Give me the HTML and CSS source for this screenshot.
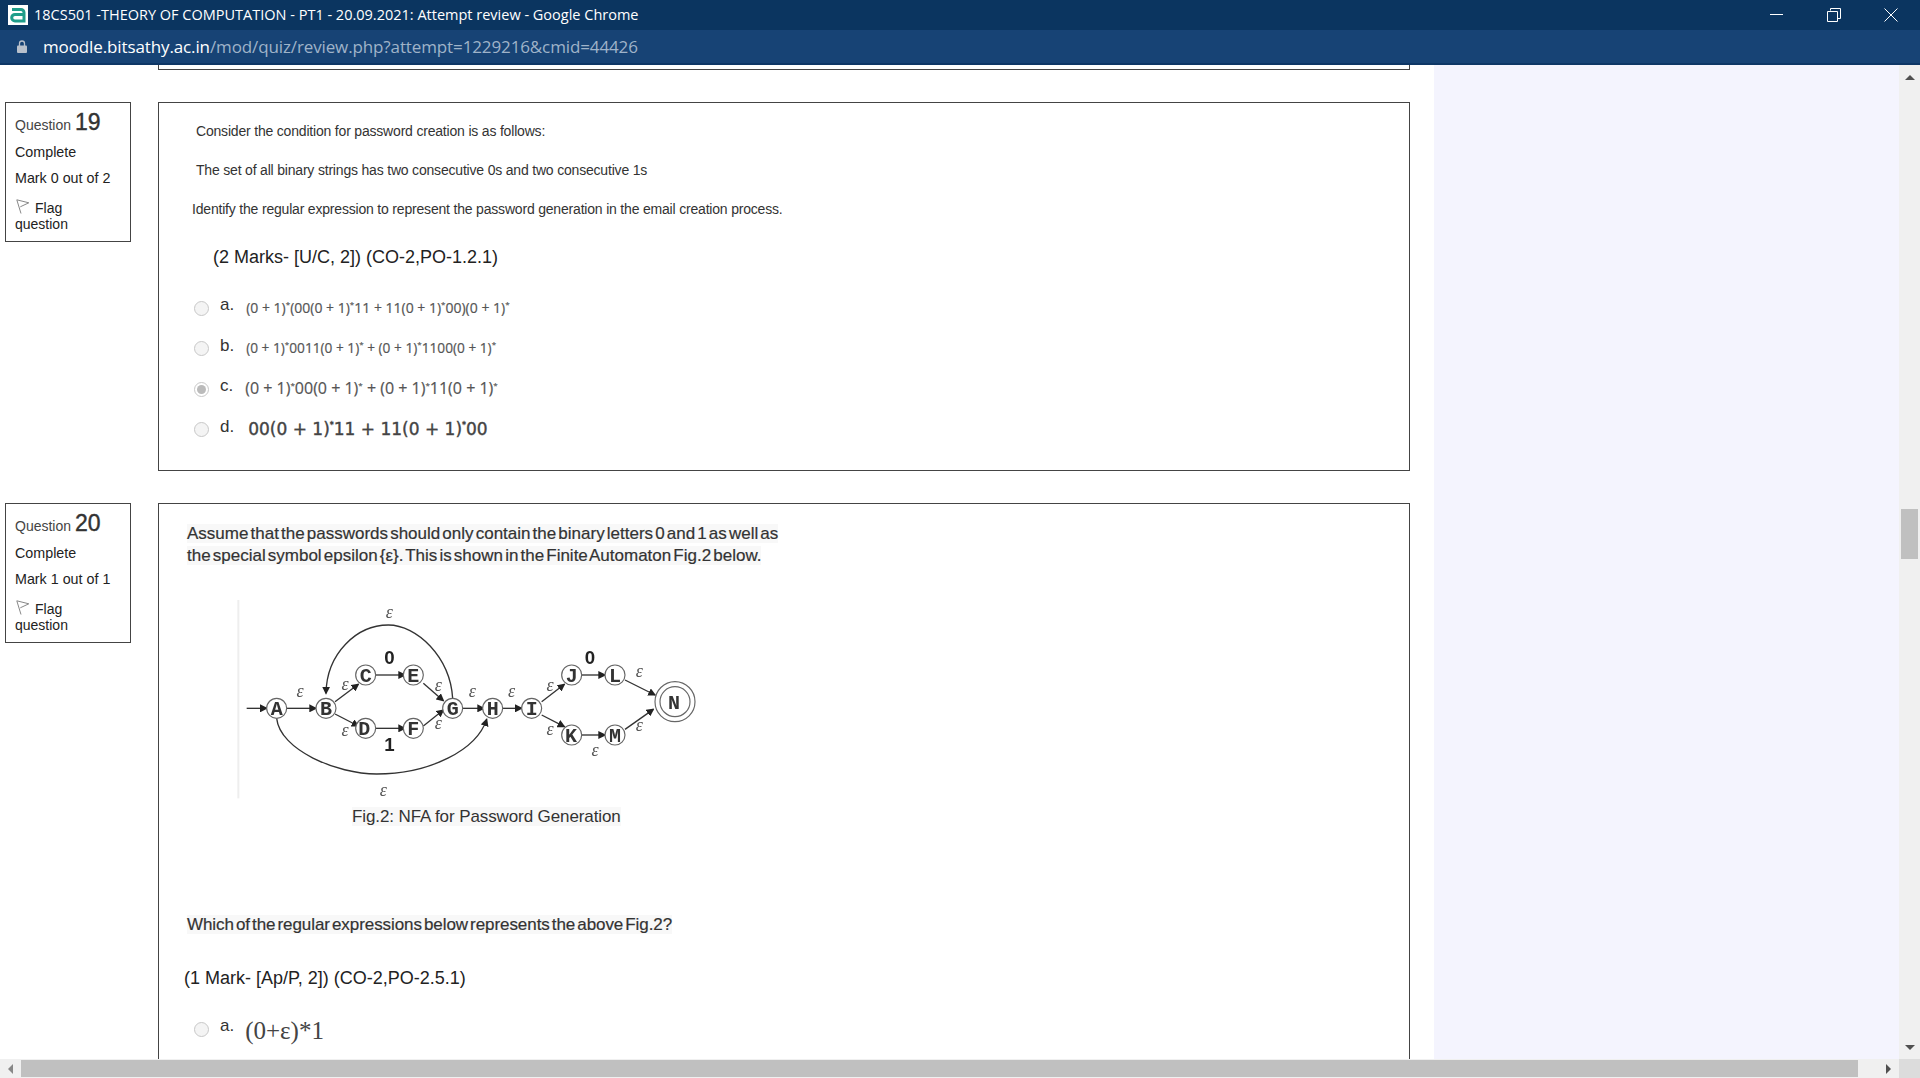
FILE: index.html
```html
<!DOCTYPE html>
<html lang="en">
<head>
    <meta charset="UTF-8">
    <meta name="viewport" content="width=device-width, initial-scale=1.0">
    <title>18CS501 -THEORY OF COMPUTATION - PT1 - 20.09.2021: Attempt review</title>
    <link rel="stylesheet" href="styles.css">
</head>
<body>

    <!-- Chrome window bars -->
    <div class="titlebar">
        <svg class="favicon" viewBox="0 0 20 20">
            <rect width="20" height="20" fill="#fff"/>
            <path d="M4 4.500h9a3 3 0 0 1 3 3v8.500H7a3.300 3.300 0 0 1 0-6.600h9" fill="none" stroke="#1f9d8a" stroke-width="3"/>
        </svg>
        <span class="window-title">18CS501 -THEORY OF COMPUTATION - PT1 - 20.09.2021: Attempt review - Google Chrome</span>
        <div class="window-buttons">
            <svg width="14" height="14" viewBox="0 0 14 14"><path d="M0 6.500h13" stroke="#fff"/></svg>
            <svg width="14" height="14" viewBox="0 0 14 14"><path d="M3.500 2.500V.5h10v10h-2.500M.5 3.500h10v10H.5z" fill="none" stroke="#fff"/></svg>
            <svg width="14" height="14" viewBox="0 0 14 14"><path d="M.5.5l13 13M13.500.5l-13 13" stroke="#fff"/></svg>
        </div>
    </div>
    <div class="addressbar">
        <svg class="lock" width="10" height="13" viewBox="0 0 10 13">
            <path d="M2.500 6V3.500a2.500 2.500 0 0 1 5 0V6" fill="none" stroke="#b8c0cb" stroke-width="1.300"/>
            <rect y="5.500" width="10" height="7.500" rx="1" fill="#b8c0cb"/>
        </svg>
        <span class="url"><span class="host">moodle.bitsathy.ac.in</span>/mod/quiz/review.php?attempt=1229216&amp;cmid=44426</span>
    </div>

    <div class="viewport">
        <div class="page">
            <main class="main">
                <div class="prev-end"></div>

                <!-- Question 19 -->
                <section class="question q19">
                    <aside class="info">
                        <h3 class="qno">Question <span class="num">19</span></h3>
                        <div class="state">Complete</div>
                        <div class="grade">Mark 0 out of 2</div>
                        <div class="flag">
                            <svg class="flag-icon" width="14" height="15" viewBox="0 0 14 15"><path d="M5 14.500L.8.800l12 3-8.500 4" fill="none" stroke="#888"/></svg>
                            <span class="flag-word">Flag</span><br>question
                        </div>
                    </aside>
                    <div class="content">
                        <p class="small-line">Consider the condition for password creation is as follows:</p>
                        <p class="small-line">The set of all binary strings has two consecutive 0s and two consecutive 1s</p>
                        <p class="small-line identify">Identify the regular expression to represent the password generation in the email creation process.</p>
                        <p class="marks marks-19">(2 Marks- [U/C, 2]) (CO-2,PO-1.2.1)</p>
                        <div class="answers">
                            <div class="option">
                                <span class="radio"></span><span class="letter">a.</span>
                                <span class="expr expr-a">(0 + 1)<sup>*</sup>(00(0 + 1)<sup>*</sup>11 + 11(0 + 1)<sup>*</sup>00)(0 + 1)<sup>*</sup></span>
                            </div>
                            <div class="option">
                                <span class="radio"></span><span class="letter">b.</span>
                                <span class="expr expr-b">(0 + 1)<sup>*</sup>0011(0 + 1)<sup>*</sup> + (0 + 1)<sup>*</sup>1100(0 + 1)<sup>*</sup></span>
                            </div>
                            <div class="option">
                                <span class="radio checked"></span><span class="letter">c.</span>
                                <span class="expr expr-c">(0 + 1)<sup>*</sup>00(0 + 1)<sup>*</sup> + (0 + 1)<sup>*</sup>11(0 + 1)<sup>*</sup></span>
                            </div>
                            <div class="option">
                                <span class="radio"></span><span class="letter">d.</span>
                                <span class="expr expr-d">00(0 + 1)<sup>*</sup>11 + 11(0 + 1)<sup>*</sup>00</span>
                            </div>
                        </div>
                    </div>
                </section>

                <!-- Question 20 -->
                <section class="question q20">
                    <aside class="info">
                        <h3 class="qno">Question <span class="num">20</span></h3>
                        <div class="state">Complete</div>
                        <div class="grade">Mark 1 out of 1</div>
                        <div class="flag">
                            <svg class="flag-icon" width="14" height="15" viewBox="0 0 14 15"><path d="M5 14.500L.8.800l12 3-8.500 4" fill="none" stroke="#888"/></svg>
                            <span class="flag-word">Flag</span><br>question
                        </div>
                    </aside>
                    <div class="content content-20">
                        <p class="lead"><span class="shade">Assume that the passwords should only contain the binary letters 0 and 1 as well as<br>the special symbol epsilon {ε}. This is shown in the Finite Automaton Fig.2 below.</span></p>

                        <svg class="nfa" width="480" height="217" viewBox="0 0 1440 651">
                            <defs>
                                <marker id="tip" markerWidth="6" markerHeight="6" refX="5" refY="3" orient="auto">
                                    <path d="M0 0L6 3L0 6z" fill="#222"/>
                                </marker>
                            </defs>
                            <path class="rule" d="M25 30V625"/>
                            <g class="edges">
                                <path d="M50 355H110"/>
                                <path d="M170 355H258"/>
                                <path d="M315 335L385 283"/>
                                <path d="M315 372L385 408"/>
                                <path d="M437 255H525"/>
                                <path d="M437 415H525"/>
                                <path d="M580 280L640 332"/>
                                <path d="M580 408L640 360"/>
                                <path d="M698 355H762"/>
                                <path d="M818 355H875"/>
                                <path d="M935 335L1003 283"/>
                                <path d="M935 375L1003 410"/>
                                <path d="M1055 255H1125"/>
                                <path d="M1055 435H1125"/>
                                <path d="M1185 270L1275 315"/>
                                <path d="M1185 418L1270 358"/>
                                <path d="M668 325C660 200 560 105 475 105C380 105 290 190 288 310"/>
                                <path d="M140 385C150 480 320 552 440 552C600 552 740 480 770 388"/>
                            </g>
                            <g class="states">
                                <circle cx="140" cy="355" r="30"/>
                                <circle cx="288" cy="355" r="30"/>
                                <circle cx="407" cy="255" r="30"/>
                                <circle cx="407" cy="415" r="30"/>
                                <circle cx="550" cy="255" r="30"/>
                                <circle cx="550" cy="415" r="30"/>
                                <circle cx="668" cy="355" r="30"/>
                                <circle cx="788" cy="355" r="30"/>
                                <circle cx="905" cy="355" r="30"/>
                                <circle cx="1025" cy="255" r="30"/>
                                <circle cx="1025" cy="435" r="30"/>
                                <circle cx="1155" cy="255" r="30"/>
                                <circle cx="1155" cy="435" r="30"/>
                                <circle cx="1335" cy="335" r="60"/>
                                <circle cx="1335" cy="335" r="45"/>
                            </g>
                            <g class="state-names">
                                <text x="140" y="376">A</text>
                                <text x="288" y="376">B</text>
                                <text x="407" y="276">C</text>
                                <text x="403" y="436">D</text>
                                <text x="550" y="276">E</text>
                                <text x="550" y="436">F</text>
                                <text x="668" y="376">G</text>
                                <text x="788" y="376">H</text>
                                <text x="905" y="376">I</text>
                                <text x="1025" y="276">J</text>
                                <text x="1023" y="456">K</text>
                                <text x="1155" y="276">L</text>
                                <text x="1155" y="456">M</text>
                                <text x="1332" y="356">N</text>
                            </g>
                            <g class="digits">
                                <text x="478" y="222">0</text>
                                <text x="478" y="482">1</text>
                                <text x="1080" y="222">0</text>
                            </g>
                            <g class="eps">
                                <text x="478" y="85">ε</text>
                                <text x="210" y="322">ε</text>
                                <text x="345" y="300">ε</text>
                                <text x="345" y="438">ε</text>
                                <text x="625" y="302">ε</text>
                                <text x="625" y="418">ε</text>
                                <text x="727" y="322">ε</text>
                                <text x="845" y="322">ε</text>
                                <text x="960" y="302">ε</text>
                                <text x="960" y="436">ε</text>
                                <text x="1228" y="262">ε</text>
                                <text x="1228" y="422">ε</text>
                                <text x="1095" y="498">ε</text>
                                <text x="460" y="618">ε</text>
                            </g>
                        </svg>

                        <p class="caption"><span class="shade">Fig.2: NFA for Password Generation</span></p>
                        <p class="lead which"><span class="shade">Which of the regular expressions below represents the above Fig.2?</span></p>
                        <p class="marks marks-20">(1 Mark- [Ap/P, 2]) (CO-2,PO-2.5.1)</p>
                        <div class="option option-20">
                            <span class="radio"></span><span class="letter">a.</span>
                            <span class="expr expr-serif">(0+ε)*1</span>
                        </div>
                    </div>
                </section>
            </main>
            <div class="side"></div>
        </div>

        <!-- scrollbars -->
        <div class="vscroll">
            <span class="arrow arrow-up"></span>
            <div class="vtrack"><div class="vthumb"></div></div>
            <span class="arrow arrow-down"></span>
        </div>
        <div class="hscroll">
            <span class="arrow arrow-left"></span>
            <div class="hthumb"></div>
            <span class="arrow arrow-right"></span>
        </div>
        <div class="corner"></div>
    </div>

</body>
</html>
```

FILE: styles.css
```css
* {
    box-sizing: border-box;
}

html, body {
    height: 100%;
}

body {
    margin: 0;
    display: flex;
    flex-direction: column;
    overflow: hidden;
    background: #fff;
    font-family: "Liberation Sans", Arial, sans-serif;
    color: #222;
}

p {
    margin: 0;
}

/* window bars */
.titlebar {
    height: 30px;
    flex: none;
    display: flex;
    align-items: center;
    background: #0b3560;
    color: #fff;
    padding: 0 0 1px 8px;
}

.favicon {
    width: 20px;
    height: 20px;
    margin-right: 6px;
}

.window-title {
    font-family: "Open Sans", sans-serif;
    font-size: 14.5px;
    white-space: nowrap;
}

.window-buttons {
    margin-left: auto;
    display: flex;
    gap: 43px;
    padding-right: 22px;
}

.addressbar {
    height: 35px;
    flex: none;
    display: flex;
    align-items: center;
    background: #174375;
    border-bottom: 2px solid #0e3766;
    padding-left: 17px;
}

.lock {
    margin-right: 16px;
}

.url {
    font-family: "Open Sans", sans-serif;
    font-size: 17px;
    letter-spacing: -.12px;
    color: #9fb3c9;
    white-space: nowrap;
}

.host {
    color: #fff;
}

/* page area */
.viewport {
    flex: 1;
    min-height: 0;
    display: grid;
    grid-template-columns: 1fr 21px;
    grid-template-rows: 1fr 19px;
}

.page {
    display: flex;
    overflow: hidden;
    min-width: 0;
    min-height: 0;
}

.main {
    width: 1434px;
    flex: none;
    background: #fff;
}

.side {
    flex: 1;
    background: #f4f4fe;
}

.prev-end {
    height: 5px;
    margin-left: 158px;
    width: 1252px;
    border: 1px solid #444;
    border-top: none;
}

.question {
    display: flex;
    align-items: flex-start;
    gap: 27px;
    padding-left: 5px;
}

.q19 {
    margin-top: 32px;
}

.q20 {
    margin-top: 32px;
}

.info {
    width: 126px;
    height: 140px;
    flex: none;
    border: 1px solid #444;
    padding: 6px 9px;
    font-size: 14px;
    color: #222;
}

.qno {
    margin: 0;
    font-size: 14px;
    font-weight: normal;
    line-height: 27px;
    color: #444;
}

.num {
    font-size: 23px;
    color: #333;
    -webkit-text-stroke: .4px #333;
}

.state, .grade {
    font-size: 14.3px;
    line-height: 26px;
}

.flag {
    margin-top: 9px;
    line-height: 16px;
    position: relative;
}

.flag-word {
    margin-left: 20px;
}

.flag-icon {
    position: absolute;
    left: 1px;
    top: -1px;
}

.content {
    width: 1252px;
    height: 369px;
    flex: none;
    border: 1px solid #444;
    position: relative;
}

.small-line {
    font-size: 14px;
    color: #333;
    line-height: 39px;
    margin-left: 37px;
    letter-spacing: -.19px;
    white-space: nowrap;
}

.small-line:first-child {
    margin-top: 9px;
}

.identify {
    margin-left: 33px;
}

.marks {
    font-size: 18px;
    color: #222;
    white-space: nowrap;
}

.marks-19 {
    margin: 14px 0 0 54px;
    line-height: 28px;
}

.answers {
    margin-top: 16px;
}

.option {
    height: 40.5px;
    display: flex;
    align-items: center;
    padding-left: 35px;
    white-space: nowrap;
}

.radio {
    width: 15px;
    height: 15px;
    flex: none;
    border: 1px solid #c8c8c8;
    border-radius: 50%;
    background: #f4f4f4;
    position: relative;
    top: 1px;
}

.radio.checked {
    background: #fff;
}

.radio.checked::after {
    content: "";
    position: absolute;
    left: 2px;
    top: 2px;
    width: 9px;
    height: 9px;
    border-radius: 50%;
    background: #bbb;
}

.letter {
    font-size: 17px;
    color: #333;
    margin-left: 11px;
    position: relative;
    top: -2px;
}

.expr {
    font-family: "Open Sans", sans-serif;
    font-size: 14px;
    color: #555;
    margin-left: 12px;
    -webkit-text-stroke: .2px #555;
}

.expr sup {
    font-size: 8px;
    line-height: 0;
}

.expr-b {
    font-size: 13.7px;
}

.expr-c {
    font-size: 16px;
}

.expr-d {
    font-family: "DejaVu Sans", sans-serif;
    font-size: 17px;
    color: #444;
    margin-left: 14px;
    -webkit-text-stroke: .4px #444;
}

.expr-serif {
    font-family: "Liberation Serif", serif;
    font-size: 25px;
    color: #444;
    margin-left: 11px;
    position: relative;
    top: 3px;
    -webkit-text-stroke: 0;
}

/* question 20 */
.content-20 {
    height: 560px;
}

.lead {
    font-size: 17px;
    line-height: 22px;
    color: #333;
    margin: 19px 0 0 28px;
    word-spacing: -2.6px;
    white-space: nowrap;
    -webkit-text-stroke: .2px #333;
}

.shade {
    background: #f8f8f8;
}

.nfa {
    display: block;
    margin: 23px 0 0 71px;
    filter: blur(.5px);
}

.rule {
    stroke: #eee;
    stroke-width: 6;
    fill: none;
}

.edges path {
    fill: none;
    stroke: #333;
    stroke-width: 4;
    marker-end: url(#tip);
}

.states circle {
    fill: #fff;
    stroke: #666;
    stroke-width: 3.5;
}

.state-names text {
    font-family: "Liberation Mono", monospace;
    font-size: 60px;
    font-weight: bold;
    text-anchor: middle;
    fill: #333;
}

.digits text {
    font-family: "Liberation Sans", sans-serif;
    font-size: 56px;
    font-weight: bold;
    text-anchor: middle;
    fill: #222;
}

.eps text {
    font-family: "Liberation Serif", serif;
    font-style: italic;
    font-size: 54px;
    text-anchor: middle;
    fill: #555;
}

.caption {
    font-size: 17px;
    letter-spacing: -.1px;
    line-height: 20px;
    margin-left: 193px;
    color: #333;
    white-space: nowrap;
}

.which {
    margin-top: 87px;
    letter-spacing: -.07px;
}

.marks-20 {
    margin: 31px 0 0 25px;
    line-height: 22px;
}

.option-20 {
    margin-top: 19px;
}

/* scrollbars */
.vscroll {
    background: #f0f0f0;
    display: flex;
    flex-direction: column;
    align-items: center;
    justify-content: space-between;
    padding: 10px 0 9px;
}

.vtrack {
    flex: 1;
    width: 100%;
    padding-top: 429px;
}

.vthumb {
    width: 17px;
    height: 50px;
    margin: 0 auto;
    background: #c0c0c0;
}

.hscroll {
    background: #f0f0f0;
    display: flex;
    align-items: center;
    padding: 0 8px 0 8px;
}

.hthumb {
    width: 1837px;
    height: 17px;
    margin-left: 8px;
    background: #c0c0c0;
}

.corner {
    background: #dcdcdc;
}

.arrow {
    width: 0;
    height: 0;
    flex: none;
    border: 5px solid transparent;
}

.arrow-up {
    border-top: none;
    border-bottom-color: #505050;
}

.arrow-down {
    border-bottom: none;
    border-top-color: #505050;
}

.arrow-left {
    border-left: none;
    border-right-color: #888;
}

.arrow-right {
    border-right: none;
    border-left-color: #505050;
    margin-left: auto;
}
```
